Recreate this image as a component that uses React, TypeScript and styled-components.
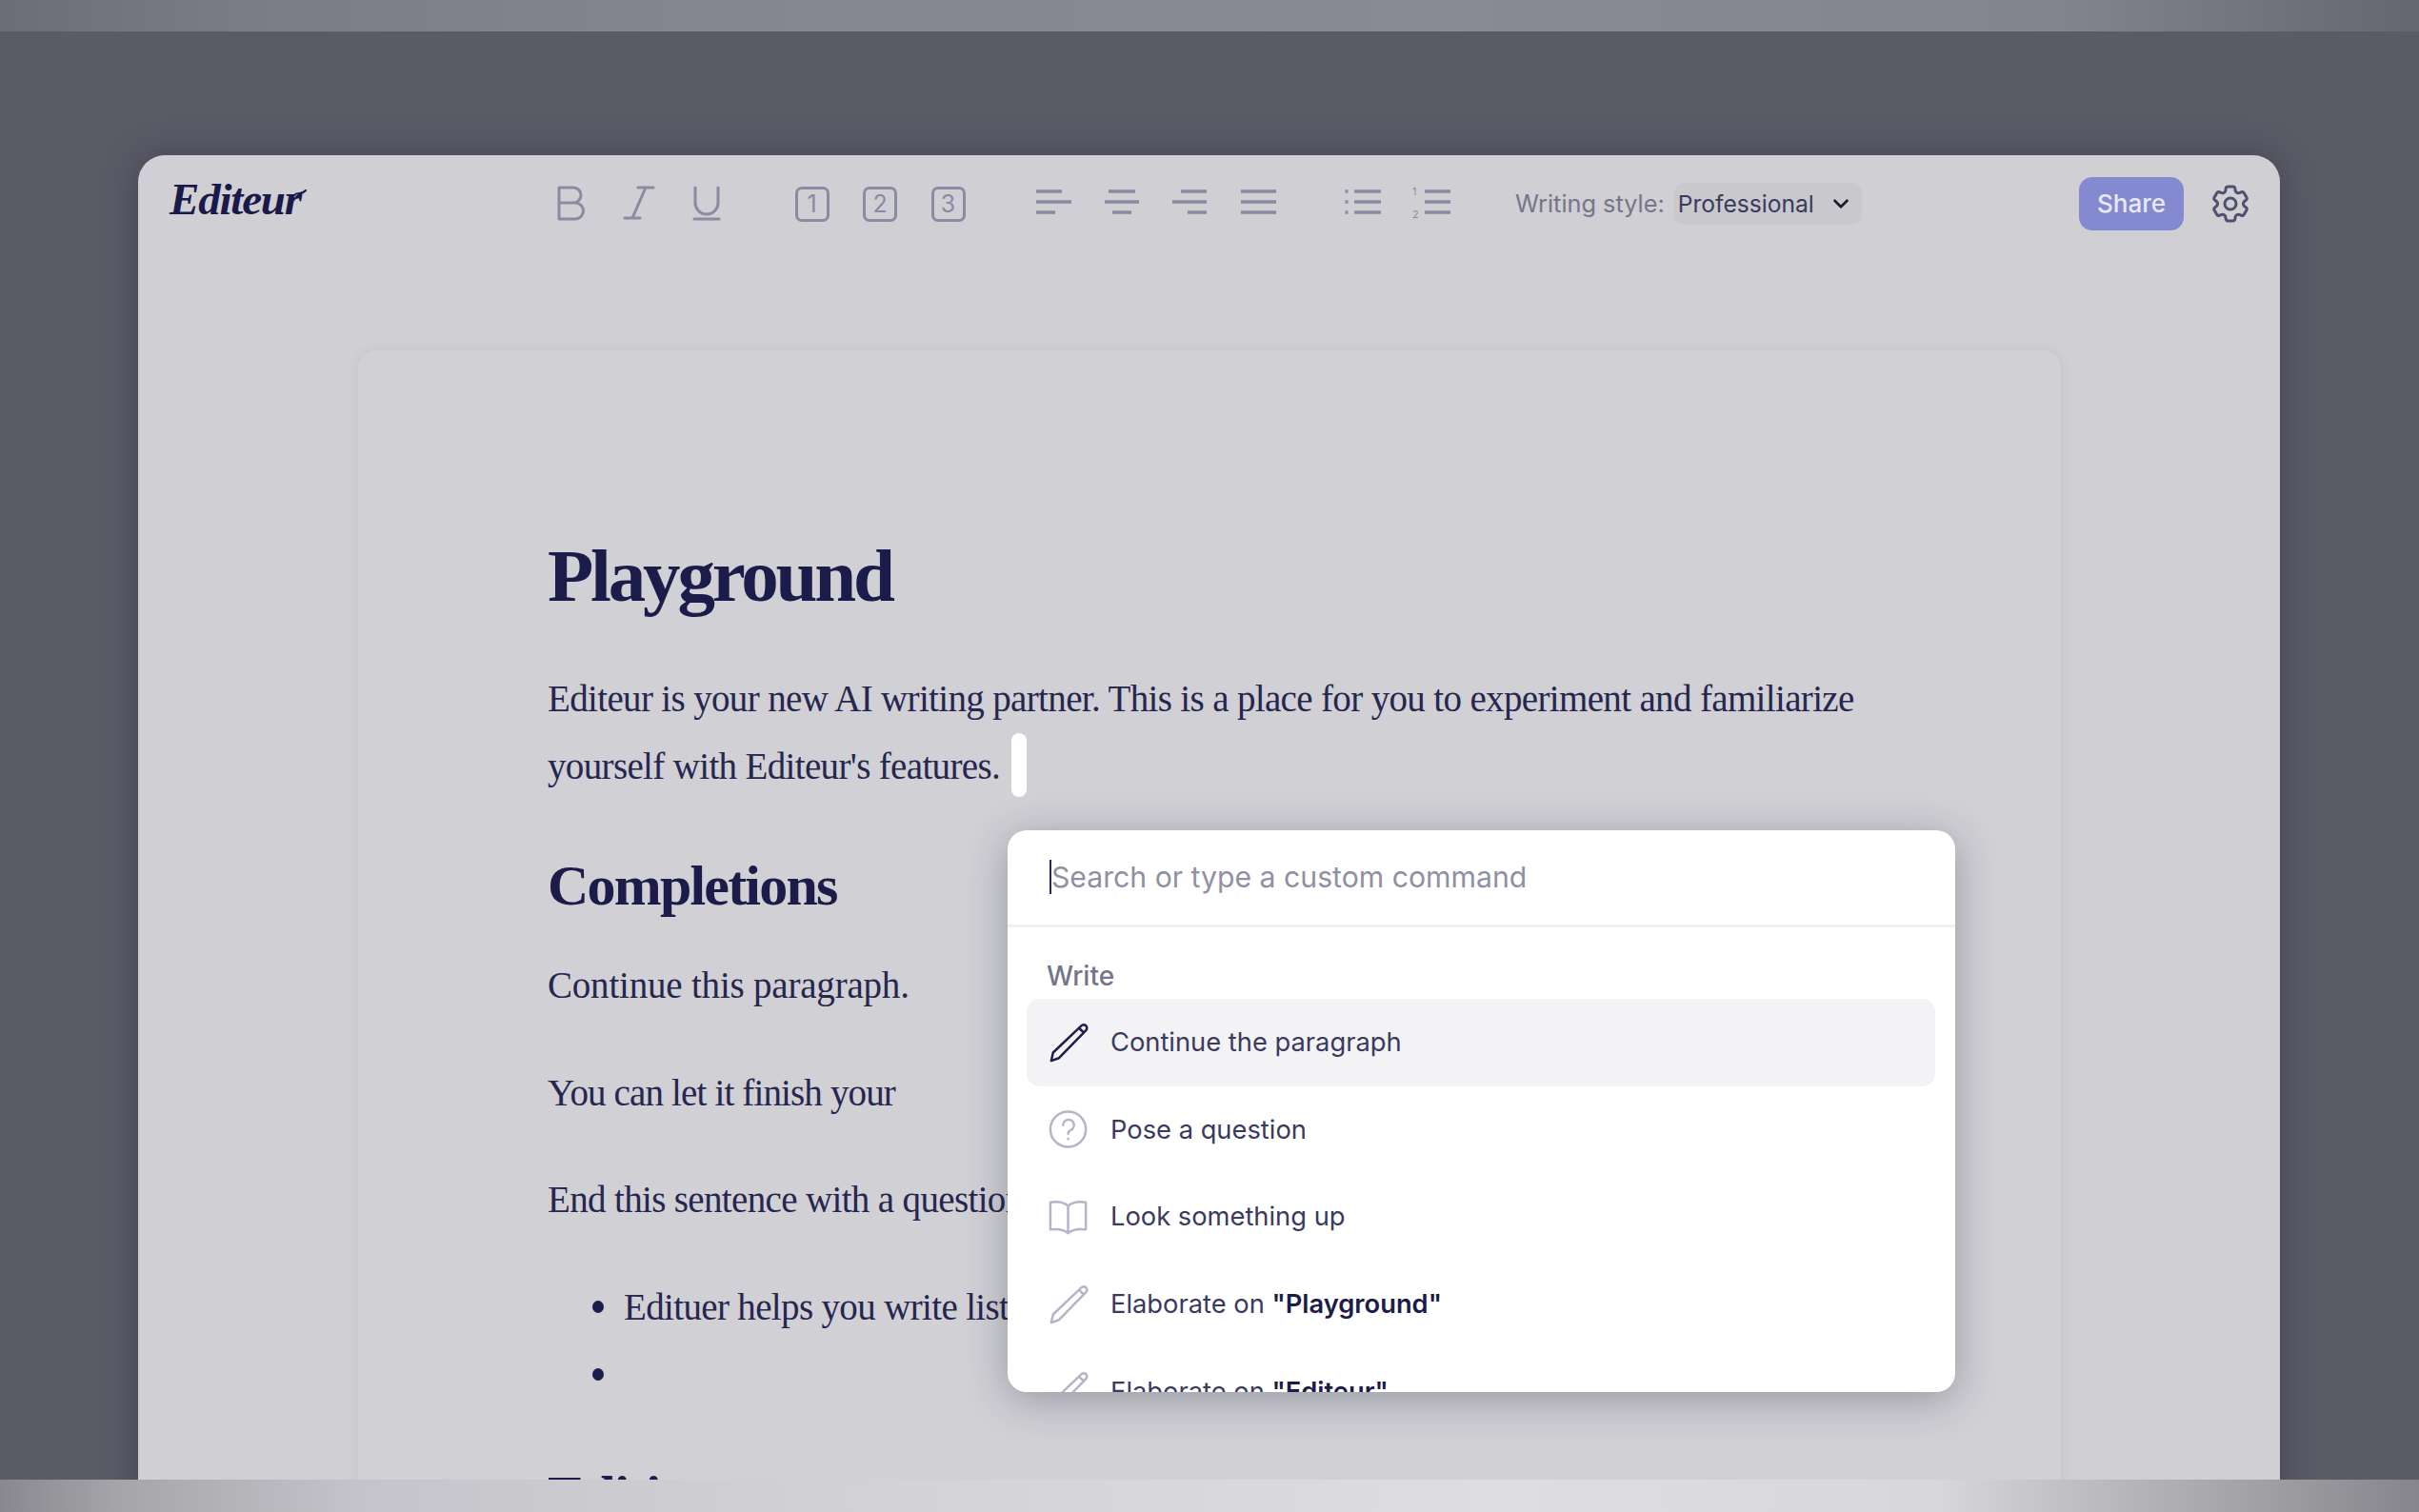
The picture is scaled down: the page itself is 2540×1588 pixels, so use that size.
import React from "react";
import styled, { createGlobalStyle } from "styled-components";
import { HiOutlineCog6Tooth } from "react-icons/hi2";
import { ChevronDown } from "lucide-react";

const Global = createGlobalStyle`
  html, body { margin: 0; padding: 0; height: 100%; overflow: hidden; background: #5b5b68; }
  * { box-sizing: border-box; }
`;

const Page = styled.div`
  width: 2540px;
  height: 1588px;
  display: flex;
  flex-direction: column;
  overflow: hidden;
  background: #5b5b68;
`;
const TopBand = styled.div`
  flex: 0 0 33px;
  background: linear-gradient(90deg, #6d6d77 0%, #7c7c86 10%, #868690 30%, #8a8a94 60%, #84848e 85%, #70707a 95%, #666670 100%);
`;
const BottomBand = styled.div`
  flex: 0 0 34.5px;
  background: linear-gradient(90deg, #88888e 0%, #a5a5aa 5%, #c4c4ca 15%, #d2d2d6 35%, #dedee1 62%, #d8d8db 80%, #b5b5ba 88%, #9a9a9f 95%, #85858b 100%);
`;
const Stage = styled.div`
  flex: 1 1 auto;
  min-height: 0;
  overflow: hidden;
  padding: 130px 146px 0 145px;
`;
const Window = styled.div`
  height: 1500px;
  padding-top: 23px;
  background: #cfcfd4;
  border-radius: 28px 28px 0 0;
  box-shadow: 0 0 36px rgba(40, 40, 55, 0.45);
`;
const Toolbar = styled.div`
  display: flex;
  align-items: center;
  height: 56px;
  padding: 0 28px 0 33px;
`;
const Logo = styled.div`
  flex: 0 0 399px;
  display: flex;
  align-items: flex-start;
  font: italic 700 47px/1 "Liberation Serif", serif;
  letter-spacing: -1.2px;
  color: #1a1a4a;
  margin-top: -10px;
`;
const LogoSwash = styled.svg`
  width: 14px;
  height: 8px;
  margin: 13px 0 0 -8px;
  fill: none;
  stroke: #1a1a4a;
  stroke-width: 2;
  stroke-linecap: round;
`;
const IconGroup = styled.div`
  display: flex;
  gap: 27.5px;
  margin-right: 66.5px;
`;
const IconBox = styled.svg`
  width: 44px;
  height: 44px;
  display: block;
  fill: none;
  stroke: #8a8aa3;
  stroke-width: 3;
  stroke-linecap: round;
  stroke-linejoin: round;
`;
const LinesIcon = styled(IconBox)`
  stroke-width: 3.6;
  stroke-linecap: butt;
`;
const NumberBox = styled.div`
  width: 36px;
  height: 37px;
  margin: 4px 4px 3px;
  border: 3px solid #8a8aa3;
  border-radius: 7px;
  display: flex;
  align-items: center;
  justify-content: center;
  font: 400 25px/1 Inter, sans-serif;
  color: #8a8aa3;
`;
const NumberSlot = styled.div`
  width: 44px;
  height: 44px;
`;
const TinyDigit = styled.text`
  font: 400 11px Inter, sans-serif;
  fill: #8a8aa3;
  stroke: none;
`;
const StyleLabel = styled.span`
  font: 400 25.3px/1 Inter, sans-serif;
  color: #76768a;
  margin-right: 10px;
  white-space: nowrap;
`;
const StyleSelect = styled.div`
  width: 197px;
  height: 44px;
  border-radius: 10px;
  background: #c8c8cd;
  display: flex;
  align-items: center;
  justify-content: space-between;
  padding: 0 9px 0 4px;
  font: 400 24.6px/1 Inter, sans-serif;
  color: #3a3a5e;
`;
const RightTools = styled.div`
  margin-left: auto;
  display: flex;
  align-items: center;
  gap: 25px;
`;
const ShareButton = styled.button`
  width: 110px;
  height: 56px;
  border: 0;
  padding: 0;
  border-radius: 14px;
  background: #8489d0;
  color: #e9e9f6;
  font: 500 26px/1 Inter, sans-serif;
`;
const Gear = styled(HiOutlineCog6Tooth)`
  width: 48px;
  height: 48px;
  color: #4f4f6e;
  display: block;
`;
const Card = styled.div`
  position: relative;
  margin: 126px 230px 0 231px;
  height: 1300px;
  background: #d0d0d5;
  border-radius: 18px;
  box-shadow: 0 0 0 2px #c9c9cf, 0 0 14px rgba(70, 70, 90, 0.06);
  padding: 189px 199px 0;
`;
const Title = styled.h1`
  margin: 0 0 44.5px;
  font: 700 79px/96px "Liberation Serif", serif;
  letter-spacing: -3.2px;
  color: #1c1c4a;
`;
const Paragraph = styled.p<{ $spacing?: number }>`
  margin: 0 0 41.5px;
  font: 400 39px/71px "Liberation Serif", serif;
  letter-spacing: ${(p) => p.$spacing ?? -0.65}px;
  color: #26264f;
  white-space: nowrap;
`;
const IntroParagraph = styled(Paragraph)`
  margin-bottom: 54px;
`;
const Heading = styled.h2`
  margin: 0 0 33.5px;
  font: 700 60px/72px "Liberation Serif", serif;
  letter-spacing: -1.8px;
  color: #1c1c4a;
`;
const BulletList = styled.ul`
  list-style: none;
  margin: 0 0 56px;
  padding: 0 0 0 47px;
`;
const BulletRow = styled.li`
  display: flex;
  align-items: center;
  gap: 21px;
  height: 71px;
  font: 400 39px/71px "Liberation Serif", serif;
  letter-spacing: -0.65px;
  color: #26264f;
  white-space: nowrap;
  &::before {
    content: "";
    flex: 0 0 12px;
    height: 13px;
    border-radius: 50%;
    background: #1c1c4a;
  }
`;
const TextCaret = styled.span`
  display: inline-block;
  width: 16px;
  height: 67px;
  margin: -30px 0 -30px 12px;
  border-radius: 8px;
  background: #ffffff;
  vertical-align: 11px;
`;
const Popup = styled.div`
  position: absolute;
  left: 682px;
  top: 504px;
  width: 995px;
  height: 590px;
  overflow: hidden;
  border-radius: 20px;
  background: #ffffff;
  box-shadow: 0 8px 44px rgba(35, 35, 55, 0.32);
`;
const SearchRow = styled.div`
  height: 102px;
  padding: 0 0 1px 44px;
  display: flex;
  align-items: center;
  border-bottom: 3px solid #f1f1f4;
  font: 400 30.2px/36px Inter, sans-serif;
  color: #9090a4;
`;
const InputCaret = styled.span`
  display: inline-block;
  height: 36px;
  border-left: 2px solid #2a2a50;
`;
const GroupLabel = styled.div`
  padding: 30px 0 0 41px;
  height: 75px;
  font: 500 28px/42px Inter, sans-serif;
  color: #75758a;
`;
const MenuList = styled.div`
  padding: 0 21px 0 20px;
`;
const MenuItem = styled.div<{ $active?: boolean }>`
  display: flex;
  align-items: center;
  gap: 23px;
  height: 91.6px;
  padding-left: 23px;
  border-radius: 14px;
  background: ${(p) => (p.$active ? "#f3f3f5" : "transparent")};
  font: 400 27.3px/1 Inter, sans-serif;
  color: #3a3a5e;
  white-space: nowrap;
`;
const Strong = styled.strong`
  font-weight: 600;
  color: #1c1c4a;
`;
const MenuIcon = styled.svg<{ $active?: boolean }>`
  width: 42px;
  height: 44px;
  flex: 0 0 42px;
  fill: none;
  stroke: ${(p) => (p.$active ? "#1e1e4b" : "#b5b5c8")};
  stroke-width: 2.6;
  stroke-linecap: round;
  stroke-linejoin: round;
`;

const PencilIcon = ({ active }: { active?: boolean }) => (
  <MenuIcon viewBox="0 0 44 44" $active={active}>
    <path d="M3 42 L5 33 L36 3.5 a3.6 3.6 0 0 1 5.2 5 L11.5 39 Z M33.5 6 L38.8 11" />
  </MenuIcon>
);

export default function App() {
  return (
    <Page>
      <Global />
      <TopBand />
      <Stage>
        <Window>
          <Toolbar>
            <Logo>
              Editeur
              <LogoSwash viewBox="0 0 14 8">
                <path d="M1 6 C4 2 7 7 13 1" />
              </LogoSwash>
            </Logo>
            <IconGroup>
              <IconBox viewBox="0 0 44 44">
                <path d="M10 5 H25 a8 8 0 0 1 0 16 H10 Z M10 21 H27 a8.5 8.5 0 0 1 0 17 H10 Z" />
              </IconBox>
              <IconBox viewBox="0 0 44 44">
                <path d="M21 5 H37 M7 37 H23 M29 5 L15 37" />
              </IconBox>
              <IconBox viewBox="0 0 44 44">
                <path d="M10 5 V21 a12 12 0 0 0 24 0 V5 M9 38 H35" />
              </IconBox>
            </IconGroup>
            <IconGroup>
              <NumberSlot><NumberBox>1</NumberBox></NumberSlot>
              <NumberSlot><NumberBox>2</NumberBox></NumberSlot>
              <NumberSlot><NumberBox>3</NumberBox></NumberSlot>
            </IconGroup>
            <IconGroup>
              <LinesIcon viewBox="0 0 44 44">
                <path d="M4 9 H31 M4 20 H41 M4 31 H24" />
              </LinesIcon>
              <LinesIcon viewBox="0 0 44 44">
                <path d="M8 9 H36 M4 20 H40 M12 31 H32" />
              </LinesIcon>
              <LinesIcon viewBox="0 0 44 44">
                <path d="M13 9 H40 M4 20 H40 M20 31 H40" />
              </LinesIcon>
              <LinesIcon viewBox="0 0 44 44">
                <path d="M4 9 H41 M4 20 H41 M4 31 H41" />
              </LinesIcon>
            </IconGroup>
            <IconGroup>
              <LinesIcon viewBox="0 0 44 44">
                <path d="M3.5 9 H6.5 M3.5 20 H6.5 M3.5 31 H6.5 M13 9 H41 M13 20 H41 M13 31 H41" />
              </LinesIcon>
              <LinesIcon viewBox="0 0 44 44">
                <TinyDigit x="2" y="13">1</TinyDigit>
                <TinyDigit x="2" y="37">2</TinyDigit>
                <path d="M15 9 H42 M15 20 H42 M15 31 H42" />
              </LinesIcon>
            </IconGroup>
            <StyleLabel>Writing style:</StyleLabel>
            <StyleSelect>
              Professional
              <ChevronDown size={26} color="#1a1a2e" strokeWidth={2.4} />
            </StyleSelect>
            <RightTools>
              <ShareButton>Share</ShareButton>
              <Gear />
            </RightTools>
          </Toolbar>
          <Card>
            <Title>Playground</Title>
            <IntroParagraph>
              Editeur is your new AI writing partner. This is a place for you to experiment and familiarize
              <br />
              yourself with Editeur's features.
              <TextCaret />
            </IntroParagraph>
            <Heading>Completions</Heading>
            <Paragraph $spacing={-0.2}>Continue this paragraph.</Paragraph>
            <Paragraph $spacing={-0.85}>You can let it finish your</Paragraph>
            <Paragraph>End this sentence with a question</Paragraph>
            <BulletList>
              <BulletRow>Edituer helps you write lists</BulletRow>
              <BulletRow />
            </BulletList>
            <Heading>Editing</Heading>
            <Popup>
              <SearchRow>
                <InputCaret />
                Search or type a custom command
              </SearchRow>
              <GroupLabel>Write</GroupLabel>
              <MenuList>
                <MenuItem $active>
                  <PencilIcon active />
                  Continue the paragraph
                </MenuItem>
                <MenuItem>
                  <MenuIcon viewBox="0 0 44 44">
                    <circle cx="21.5" cy="22" r="19.5" />
                    <path d="M16 17.5 a6 6 0 1 1 8.5 5.4 c-1.8 .8 -3 1.8 -3 4.1 M21.5 32.5 v.2" />
                  </MenuIcon>
                  Pose a question
                </MenuItem>
                <MenuItem>
                  <MenuIcon viewBox="0 0 44 44">
                    <path d="M21.5 10 C17 6 9 5 2 6 V36 C9 35 17 36 21.5 40 C26 36 34 35 41 36 V6 C34 5 26 6 21.5 10 Z M21.5 10 V40" />
                  </MenuIcon>
                  Look something up
                </MenuItem>
                <MenuItem>
                  <PencilIcon />
                  <span>Elaborate on <Strong>"Playground"</Strong></span>
                </MenuItem>
                <MenuItem>
                  <PencilIcon />
                  <span>Elaborate on <Strong>"Editeur"</Strong></span>
                </MenuItem>
              </MenuList>
            </Popup>
          </Card>
        </Window>
      </Stage>
      <BottomBand />
    </Page>
  );
}
